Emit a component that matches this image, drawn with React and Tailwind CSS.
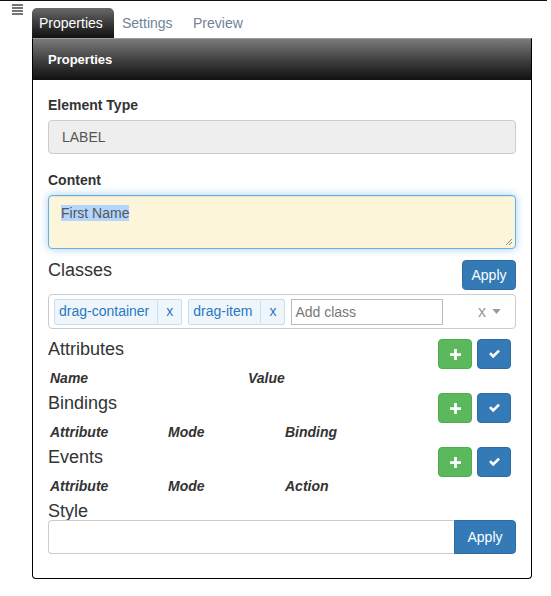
import React from 'react'

const PlusIcon = () => (
  <svg viewBox="0 0 12 12" className="w-[11px] h-[11px]">
    <path d="M4.5 0h3v4.5H12v3H7.5V12h-3V7.5H0v-3h4.5z" fill="#fff" />
  </svg>
)

const CheckIcon = () => (
  <svg viewBox="0 0 14 11" className="w-[13px] h-[10px]">
    <path d="M1 5.5l2-2 2.6 2.6L11 0.7l2 2-7.4 7.4z" fill="#fff" />
  </svg>
)

function ActionButtons() {
  return (
    <div className="flex gap-[5px] mr-[5px]">
      <button className="w-[34px] h-[30px] rounded-[4px] bg-[#5cb85c] border border-[#4cae4c] flex items-center justify-center">
        <PlusIcon />
      </button>
      <button className="w-[34px] h-[30px] rounded-[4px] bg-[#337ab7] border border-[#2e6da4] flex items-center justify-center">
        <CheckIcon />
      </button>
    </div>
  )
}

function Section({ title, cols }) {
  return (
    <div className="mb-[5px]">
      <div className="flex justify-between items-start h-[29px]">
        <span className="text-[18px] leading-[20px] text-[#333]">{title}</span>
        <ActionButtons />
      </div>
      <div className="flex h-[20px] leading-[20px] text-[14px] font-bold italic text-[#333] pl-[2px]">
        {cols.map(c => (
          <span key={c.label} style={{ width: c.w }}>{c.label}</span>
        ))}
      </div>
    </div>
  )
}

function Tag({ label }) {
  return (
    <div className="flex items-center h-[26px] bg-[#eef6fc] border border-[#c4dff2] rounded-[2px] text-[14px] text-[#2a78bf]">
      <span className="pl-[4px] pr-[8px] leading-[25px]">{label}</span>
      <span className="w-px h-[22px] bg-[#c4dff2]" />
      <span className="px-[8px] leading-[25px]">x</span>
    </div>
  )
}

export default function App() {
  return (
    <div className="w-[551px] h-[596px] bg-white font-['Liberation_Sans',Arial,sans-serif] text-[#333] overflow-hidden">
      <div className="h-px w-[547px] bg-[#111]" />
      <div className="flex">
        {/* hamburger */}
        <div className="w-8 pl-3 pt-[3px]">
          <div className="flex flex-col gap-px w-[11px]">
            <div className="h-[2px] bg-[#777]" />
            <div className="h-[2px] bg-[#777]" />
            <div className="h-[2px] bg-[#777]" />
            <div className="h-[2px] bg-[#777]" />
          </div>
        </div>

        <div className="w-[500px]">
          {/* tabs */}
          <div className="flex items-end h-[30px] mt-[7px] text-[14px]">
            <div className="w-[82px] h-[30px] rounded-t-[5px] bg-gradient-to-b from-[#6a6a6a] to-[#111] text-white pl-[7px] leading-[31px]">
              Properties
            </div>
            <div className="pl-2 w-[79px] leading-[31px] h-[30px] text-[#6f8296]">Settings</div>
            <div className="leading-[31px] h-[30px] text-[#6f8296]">Preview</div>
          </div>

          {/* panel */}
          <div className="border border-black border-t-[#9a9a9a] rounded-b-[4px] h-[541px]">
            <div className="h-[41px] bg-gradient-to-b from-[#7b7b7b] to-[#111] text-white text-[13px] font-bold pl-[15px] leading-[42px]">
              Properties
            </div>

            <div className="px-[15px] pt-[15px]">
              <div className="text-[14px] font-bold leading-[20px] mb-[5px]">Element Type</div>
              <div className="h-[34px] bg-[#eee] border border-[#ccc] rounded-[4px] px-[13px] text-[14px] text-[#555] leading-[32px]">
                LABEL
              </div>

              <div className="text-[14px] font-bold leading-[20px] mt-[16px] mb-[5px]">Content</div>
              <div className="relative h-[54px] bg-[#fdf5da] border border-[#66afe9] rounded-[4px] shadow-[inset_0_1px_1px_rgba(0,0,0,0.075),0_0_8px_rgba(102,175,233,0.6)] px-[12px] pt-[7px] text-[14px] text-[#555] leading-[20px]">
                <span className="bg-[#b4d5fe]">First Name</span>
                <svg viewBox="0 0 8 8" className="absolute right-[2px] bottom-[2px] w-[8px] h-[8px]">
                  <path d="M7 1L1 7M7 4L4 7" stroke="#888" strokeWidth="1" />
                </svg>
              </div>

              <div className="flex justify-between items-start mt-[11px] h-[30px]">
                <span className="text-[18px] leading-[20px]">Classes</span>
                <button className="h-[30px] w-[54px] rounded-[4px] bg-[#337ab7] border border-[#2e6da4] text-white text-[14px]">
                  Apply
                </button>
              </div>

              <div className="mt-[4px] h-[35px] border border-[#ccc] rounded-[4px] flex items-center pl-[5px] pr-[14px]">
                <div className="flex gap-[6px] items-center">
                  <Tag label="drag-container" />
                  <Tag label="drag-item" />
                  <div className="w-[152px] h-[26px] border border-[#bbb] text-[14px] text-[#777] leading-[25px] pl-[3px]">
                    Add class
                  </div>
                </div>
                <div className="ml-auto flex items-center gap-[6px]">
                  <span className="text-[16px] text-[#999] leading-none">x</span>
                  <svg viewBox="0 0 10 6" className="w-[9px] h-[5px]">
                    <path d="M0 0h10L5 6z" fill="#999" />
                  </svg>
                </div>
              </div>

              <div className="mt-[10px]">
                <Section title="Attributes" cols={[{ label: 'Name', w: 198 }, { label: 'Value', w: 120 }]} />
                <Section
                  title="Bindings"
                  cols={[{ label: 'Attribute', w: 118 }, { label: 'Mode', w: 117 }, { label: 'Binding', w: 120 }]}
                />
                <Section
                  title="Events"
                  cols={[{ label: 'Attribute', w: 118 }, { label: 'Mode', w: 117 }, { label: 'Action', w: 120 }]}
                />
              </div>

              <div className="text-[18px] leading-[20px] h-[19px]">Style</div>
              <div className="flex h-[34px]">
                <div className="flex-1 border border-[#ccc] border-r-0 rounded-l-[4px]" />
                <button className="w-[62px] bg-[#337ab7] border border-[#2e6da4] rounded-r-[4px] text-white text-[14px]">
                  Apply
                </button>
              </div>
            </div>
          </div>
        </div>
      </div>
    </div>
  )
}
